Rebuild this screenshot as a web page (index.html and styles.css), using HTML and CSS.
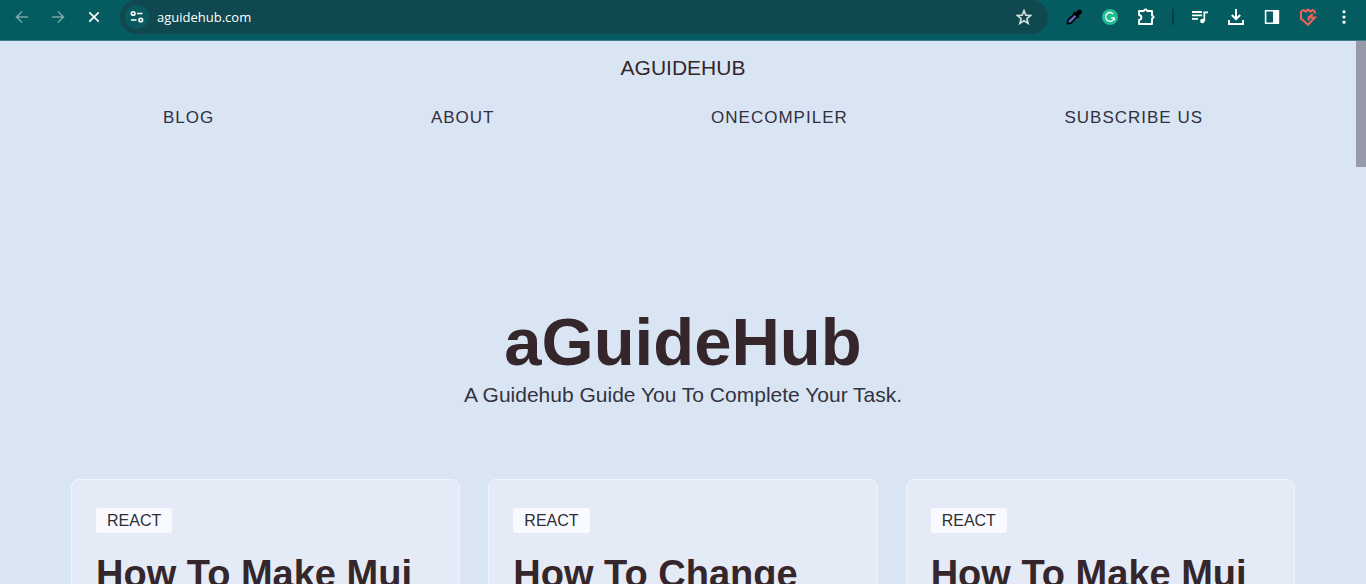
FILE: index.html
```html
<!DOCTYPE html>
<html lang="en">
<head>
<meta charset="utf-8">
<title>aGuideHub</title>
<link rel="stylesheet" href="styles.css">
</head>
<body>
<div class="browser">
  <div class="toolbar">
    <button class="tool dim" aria-label="Back"><svg viewBox="0 0 16 16"><path d="M14 8H3M8 2.5 2.5 8 8 13.5"/></svg></button>
    <button class="tool dim" aria-label="Forward"><svg viewBox="0 0 16 16"><path d="M2 8h11M8 2.5 13.5 8 8 13.5"/></svg></button>
    <button class="tool" aria-label="Stop loading"><svg viewBox="0 0 16 16"><path stroke-width="1.7" d="m3.3 3.3 9.4 9.4M12.7 3.3l-9.4 9.4"/></svg></button>
    <div class="address">
      <button class="site-info" aria-label="Site information"><svg viewBox="0 0 16 16"><circle cx="4.2" cy="4.5" r="1.8"/><path d="M8 4.5h5.5M2 11h5.5"/><circle cx="11.8" cy="11" r="1.8"/></svg></button>
      <input class="url" type="text" value="aguidehub.com" aria-label="Address">
      <button class="tool star" aria-label="Bookmark"><svg viewBox="0 0 16 16"><path stroke-width="1.7" d="m8 1.6 1.8 4.5 4.9.4-3.8 3.1 1.2 4.7L8 11.7l-4.1 2.6 1.2-4.7-3.8-3.1 4.9-.4z"/></svg></button>
    </div>
    <div class="extensions">
      <button class="tool" aria-label="Color picker"><svg viewBox="0 0 16 16"><path fill="#5d68c4" stroke="#000" stroke-width="1.6" d="m8.7 4.8 2.7 2.7-6 6.2-3.2 1.1-.9-.8.9-3.2z"/><path fill="#000" stroke="#000" stroke-width="1" d="m7.4 4 1.4-1 1.4 1.1L12.4 1l2.7.5.3 2.5-2.9 2.5.5 1.3-1 1.2z"/></svg></button>
      <button class="tool" aria-label="Grammarly"><svg viewBox="0 0 16 16"><circle cx="8" cy="8" r="8" fill="#20bd91" stroke="none"/><path stroke-width="1.3" d="M11.2 4.9A4.4 4.4 0 1 0 12.3 8.8H9M12.2 8.5v2.8"/></svg></button>
      <button class="tool wide" aria-label="Extensions"><svg viewBox="0 0 18 18"><path stroke-width="1.9" stroke-linejoin="round" d="M2 3h5q.2-1.6 1.5-1.6T10 3h5v4.6q1.7.2 1.7 1.4T15 10.4V16H2v-4c3.2-.3 3.2-4.7 0-5z"/></svg></button>
      <span class="divider"></span>
      <button class="tool" aria-label="Media"><svg viewBox="0 0 16 16"><path stroke-width="1.8" d="M0 3h10M0 6.4h10M0 9.8h6M12.3 12V3.3H16"/><circle cx="10.4" cy="12" r="2.3" fill="#fff" stroke="none"/></svg></button>
      <button class="tool" aria-label="Downloads"><svg viewBox="0 0 16 16"><path stroke-width="2" d="M8 0v10M3.8 6 8 10.2 12.2 6M1 11v4h14v-4"/></svg></button>
      <button class="tool" aria-label="Side panel"><svg viewBox="0 0 16 16"><path stroke-width="1.6" d="M1.6 1.8h12.8v12.4H1.6z"/><path fill="#fff" stroke="none" d="M9 1.5h5.5v13H9z"/></svg></button>
      <button class="tool wide" aria-label="Profile"><svg viewBox="0 0 18 18"><path stroke="#f0625a" stroke-width="2" d="M16 5.5V3.8L13.5 2l-2.2 1.6L9 1.6 6.7 3.6 4.5 2 2 3.8V10.5l7 6.3 7-7.3H9.5M14 6 9.5 9.5l.3 3"/></svg></button>
      <button class="tool" aria-label="Menu"><svg viewBox="0 0 16 16"><g fill="#fff" stroke="none"><circle cx="8" cy="2.8" r="1.6"/><circle cx="8" cy="8" r="1.6"/><circle cx="8" cy="13.2" r="1.6"/></g></svg></button>
    </div>
  </div>
  <div class="page">
    <div class="scroll-thumb"></div>
    <header class="site-header">
      <a class="brand" href="#">AGUIDEHUB</a>
      <nav class="nav">
        <a href="#">BLOG</a>
        <a href="#">ABOUT</a>
        <a href="#">ONECOMPILER</a>
        <a href="#">SUBSCRIBE US</a>
      </nav>
    </header>
    <section class="hero">
      <h1>aGuideHub</h1>
      <p>A Guidehub Guide You To Complete Your Task.</p>
    </section>
    <main class="cards">
      <article class="card"><a class="tag" href="#">REACT</a><h2>How To Make Mui</h2></article>
      <article class="card"><a class="tag" href="#">REACT</a><h2>How To Change</h2></article>
      <article class="card"><a class="tag" href="#">REACT</a><h2>How To Make Mui</h2></article>
    </main>
  </div>
</div>
</body>
</html>
```
FILE: styles.css
```css
* { box-sizing: border-box; }
body { margin: 0; font-family: "Liberation Sans", Arial, sans-serif; color: #35262b; }
a { color: inherit; text-decoration: none; }
.browser { height: 100vh; display: flex; flex-direction: column; overflow: hidden; }
.toolbar {
  display: flex;
  align-items: center;
  flex: none;
  gap: 20px;
  padding: 0 14px 7px;
  height: 41px;
  background: #045c60;
  border-bottom: 1px solid #3f7f89;
}
button { border: 0; padding: 0; background: none; display: flex; align-items: center; justify-content: center; }
svg { fill: none; stroke: #fff; stroke-width: 1.6; display: block; width: 100%; height: 100%; }
.tool { width: 16px; height: 16px; flex: none; }
.tool.dim { opacity: .45; }
.tool.wide { width: 18px; height: 18px; margin: 0 -1px; }
.address {
  flex: 1;
  display: flex;
  align-items: center;
  height: 34px;
  margin: 0 -2px;
  padding: 0 16px 0 5px;
  border-radius: 17px;
  background: #104850;
}
.site-info { width: 24px; height: 24px; padding: 4px; border-radius: 50%; background: #085a5f; }
.url {
  flex: 1;
  min-width: 0;
  margin-left: 8px;
  padding: 0;
  border: 0;
  outline: 0;
  background: none;
  color: #fff;
  font: 13px "Open Sans", "Noto Sans", sans-serif;
}
.star { opacity: .8; }
.extensions { display: flex; align-items: center; gap: 20px; }
.divider { width: 2px; height: 16px; margin: 0 -2px; background: #063e48; }
.page { flex: 1; min-height: 0; position: relative; overflow: hidden; background: #dae5f4; }
.scroll-thumb { position: absolute; top: 0; right: 0; width: 10px; height: 126px; background: #9699a7; }
.site-header { display: flex; flex-direction: column; align-items: center; padding: 14px 4% 0; }
.brand { font-size: 21px; line-height: 26px; }
.nav {
  display: flex;
  justify-content: space-around;
  align-self: stretch;
  margin-top: 27px;
  font-size: 17px;
  line-height: 20px;
  letter-spacing: 1px;
  color: #303040;
}
.hero { padding-top: 174px; text-align: center; }
h1 { margin: 0; font-size: 67px; line-height: 80px; }
.hero p { margin: 0; font-size: 21px; line-height: 26px; color: #343340; }
.cards {
  display: grid;
  grid-template-columns: repeat(3, 1fr);
  gap: 28px;
  max-width: 1224px;
  margin: 71px auto 0;
}
.card { padding: 28px 24px; border: 1px solid #f0f5fc; border-radius: 8px; background: #e4ebf6; }
.tag {
  display: inline-block;
  padding: 0 11px;
  border-radius: 3px;
  background: #f8faff;
  font-size: 16px;
  line-height: 25px;
  color: #302d34;
}
h2 { margin: 19px 0 0; font-size: 38px; line-height: 44px; white-space: nowrap; }
```
